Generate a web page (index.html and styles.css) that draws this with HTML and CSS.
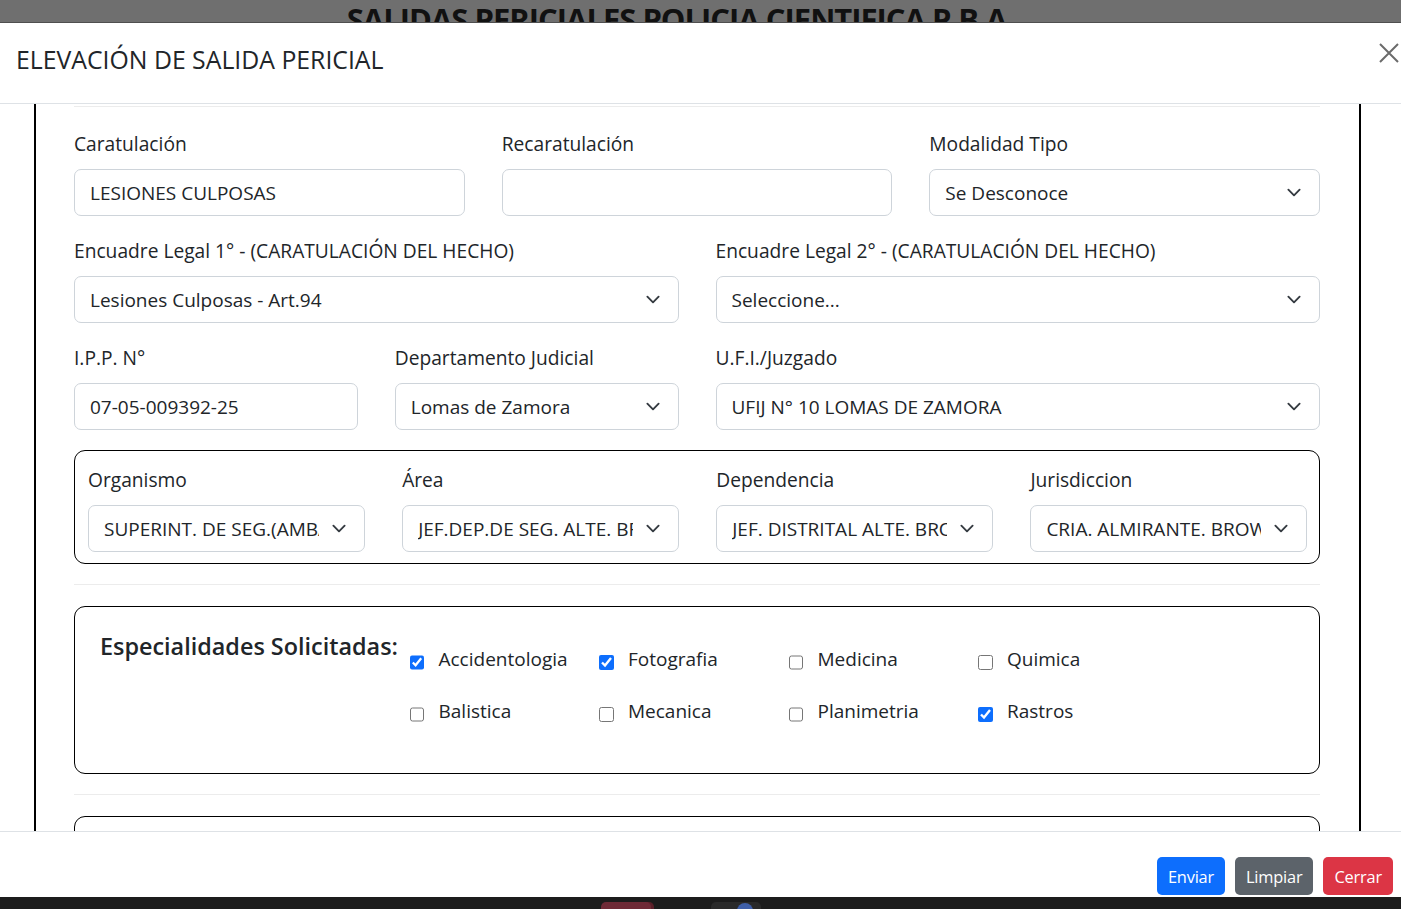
FILE: index.html
```html
<!DOCTYPE html>
<html lang="es">
<head>
<meta charset="utf-8">
<title>Elevación de salida pericial</title>
<link rel="stylesheet" href="styles.css">
</head>
<body>
<div class="app-bg">
  <h1 class="app-title">SALIDAS PERICIALES POLICIA CIENTIFICA P.B.A.</h1>
</div>
<div class="modal">
  <div class="modal-header">
    <h5 class="modal-title">ELEVACIÓN DE SALIDA PERICIAL</h5>
    <button class="btn-close" type="button" aria-label="Cerrar">
      <svg viewBox="0 0 20 20" width="20" height="20"><path d="M1 1L19 19M19 1L1 19" stroke="#6b6b6b" stroke-width="2" fill="none"/></svg>
    </button>
  </div>
  <div class="modal-body">
    <div class="frame">
      <hr class="sep sep-top">
      <div class="grid cols-3">
        <div class="field"><label class="lbl">Caratulación</label><input class="control" type="text" value="LESIONES CULPOSAS" readonly></div>
        <div class="field"><label class="lbl">Recaratulación</label><input class="control" type="text" value="" readonly></div>
        <div class="field"><label class="lbl">Modalidad Tipo</label><div class="control select"><span class="sel-text">Se Desconoce</span><svg class="chev" viewBox="0 0 16 16"><path d="m2 5 6 6 6-6" fill="none" stroke="#343a40" stroke-linecap="round" stroke-linejoin="round" stroke-width="2"/></svg></div></div>
      </div>
      <div class="grid cols-2">
        <div class="field"><label class="lbl">Encuadre Legal 1° - (CARATULACIÓN DEL HECHO)</label><div class="control select"><span class="sel-text">Lesiones Culposas - Art.94</span><svg class="chev" viewBox="0 0 16 16"><path d="m2 5 6 6 6-6" fill="none" stroke="#343a40" stroke-linecap="round" stroke-linejoin="round" stroke-width="2"/></svg></div></div>
        <div class="field"><label class="lbl">Encuadre Legal 2° - (CARATULACIÓN DEL HECHO)</label><div class="control select"><span class="sel-text">Seleccione...</span><svg class="chev" viewBox="0 0 16 16"><path d="m2 5 6 6 6-6" fill="none" stroke="#343a40" stroke-linecap="round" stroke-linejoin="round" stroke-width="2"/></svg></div></div>
      </div>
      <div class="grid cols-4">
        <div class="field"><label class="lbl">I.P.P. N°</label><input class="control" type="text" value="07-05-009392-25" readonly></div>
        <div class="field"><label class="lbl">Departamento Judicial</label><div class="control select"><span class="sel-text">Lomas de Zamora</span><svg class="chev" viewBox="0 0 16 16"><path d="m2 5 6 6 6-6" fill="none" stroke="#343a40" stroke-linecap="round" stroke-linejoin="round" stroke-width="2"/></svg></div></div>
        <div class="field span-2"><label class="lbl">U.F.I./Juzgado</label><div class="control select"><span class="sel-text">UFIJ N° 10 LOMAS DE ZAMORA</span><svg class="chev" viewBox="0 0 16 16"><path d="m2 5 6 6 6-6" fill="none" stroke="#343a40" stroke-linecap="round" stroke-linejoin="round" stroke-width="2"/></svg></div></div>
      </div>
      <div class="group-box">
        <div class="grid cols-4 inner">
          <div class="field"><label class="lbl">Organismo</label><div class="control select"><span class="sel-text">SUPERINT. DE SEG.(AMBA SUR)</span><svg class="chev" viewBox="0 0 16 16"><path d="m2 5 6 6 6-6" fill="none" stroke="#343a40" stroke-linecap="round" stroke-linejoin="round" stroke-width="2"/></svg></div></div>
          <div class="field"><label class="lbl">Área</label><div class="control select"><span class="sel-text">JEF.DEP.DE SEG. ALTE. BROWN</span><svg class="chev" viewBox="0 0 16 16"><path d="m2 5 6 6 6-6" fill="none" stroke="#343a40" stroke-linecap="round" stroke-linejoin="round" stroke-width="2"/></svg></div></div>
          <div class="field"><label class="lbl">Dependencia</label><div class="control select"><span class="sel-text">JEF. DISTRITAL ALTE. BROWN</span><svg class="chev" viewBox="0 0 16 16"><path d="m2 5 6 6 6-6" fill="none" stroke="#343a40" stroke-linecap="round" stroke-linejoin="round" stroke-width="2"/></svg></div></div>
          <div class="field"><label class="lbl">Jurisdiccion</label><div class="control select"><span class="sel-text">CRIA. ALMIRANTE. BROWN 1ra</span><svg class="chev" viewBox="0 0 16 16"><path d="m2 5 6 6 6-6" fill="none" stroke="#343a40" stroke-linecap="round" stroke-linejoin="round" stroke-width="2"/></svg></div></div>
        </div>
      </div>
      <hr class="sep sep-mid">
      <div class="spec-box">
        <h4 class="spec-title">Especialidades Solicitadas:</h4>
        <div class="spec-grid">
          <label class="check"><input type="checkbox" checked>Accidentologia</label>
          <label class="check"><input type="checkbox" checked>Fotografia</label>
          <label class="check"><input type="checkbox">Medicina</label>
          <label class="check"><input type="checkbox">Quimica</label>
          <label class="check"><input type="checkbox">Balistica</label>
          <label class="check"><input type="checkbox">Mecanica</label>
          <label class="check"><input type="checkbox">Planimetria</label>
          <label class="check"><input type="checkbox" checked>Rastros</label>
        </div>
      </div>
      <hr class="sep sep-mid">
      <div class="spec-box empty"></div>
    </div>
  </div>
  <div class="modal-footer">
    <button class="btn btn-primary" type="button">Enviar</button>
    <button class="btn btn-secondary" type="button">Limpiar</button>
    <button class="btn btn-danger" type="button">Cerrar</button>
  </div>
</div>
<div class="taskbar">
  <span class="tb-icon tb-red"></span>
  <span class="tb-icon tb-dark"><span class="tb-dot"></span></span>
</div>
</body>
</html>
```

FILE: styles.css
```css
html, body {
  margin: 0;
  height: 909px;
  overflow: hidden;
}
body {
  font-family: "Open Sans", "Noto Sans", sans-serif;
  color: #212529;
  background: #6f6f6f;
  display: flex;
  flex-direction: column;
}

/* page behind the modal */
.app-bg {
  flex: none;
  height: 22px;
  overflow: hidden;
  background: #6f6f6f;
}
.app-title {
  margin: 0;
  padding: 2px 40px 0 0;
  text-align: center;
  font-size: 31px;
  line-height: 34px;
  letter-spacing: -1px;
  font-weight: 700;
  color: #111;
  white-space: nowrap;
}

/* modal */
.modal {
  flex: 1;
  min-height: 0;
  display: flex;
  flex-direction: column;
  background: #fff;
  border-top: 1px solid #4f4f4f;
}
.modal-header {
  flex: none;
  height: 81px;
  box-sizing: border-box;
  border-bottom: 1px solid #dee2e6;
  display: flex;
  justify-content: space-between;
  align-items: flex-start;
  padding: 0 2px 0 16px;
}
.modal-title {
  margin: 21px 0 0;
  font-size: 24.8px;
  line-height: 30px;
  font-weight: 500;
  color: #212529;
}
.btn-close {
  margin-top: 20px;
  padding: 0;
  border: 0;
  background: none;
  width: 20px;
  height: 20px;
}
.btn-close svg { display: block; }

.modal-body {
  flex: none;
  height: 727px;
  overflow: hidden;
}
.frame {
  margin-left: 34px;
  width: 1327px;
  height: 100%;
  box-sizing: border-box;
  border-left: 2px solid #000;
  border-right: 2px solid #000;
  padding: 2px 39px 0 38px;
}
.sep {
  border: 0;
  border-top: 1px solid #ececec;
  margin: 0;
}
.sep-top { margin-bottom: 22px; }
.sep-mid { margin: 20px 0 20.5px; }

.grid {
  display: grid;
  column-gap: 37px;
}
.cols-3 { grid-template-columns: repeat(3, 1fr); }
.cols-2 { grid-template-columns: repeat(2, 1fr); }
.cols-4 { grid-template-columns: repeat(4, 1fr); }
.span-2 { grid-column: span 2; }

.field { margin-bottom: 20px; min-width: 0; }
.lbl {
  display: block;
  font-size: 19.2px;
  line-height: 30px;
  margin-bottom: 9.5px;
  white-space: nowrap;
}
.control {
  display: flex;
  align-items: center;
  width: 100%;
  height: 47.5px;
  box-sizing: border-box;
  margin: 0;
  border: 1px solid #ced4da;
  border-radius: 7px;
  padding: 1px 15px 0;
  font-family: inherit;
  font-size: 19px;
  color: #212529;
  background: #fff;
  outline: none;
}
.select { padding-right: 15px; }
.sel-text {
  flex: 1;
  min-width: 0;
  overflow: hidden;
  white-space: nowrap;
  margin-right: 10px;
}
.chev {
  flex: none;
  width: 20px;
  height: 15px;
}

/* bordered groups */
.group-box {
  border: 1px solid #000;
  border-radius: 11px;
  padding: 14px 12px 11px 13px;
}
.group-box .inner { column-gap: 37.5px; }
.group-box .field { margin-bottom: 0; }

.spec-box {
  border: 1px solid #000;
  border-radius: 11px;
  padding: 24.5px 25px 47px;
  display: flex;
  align-items: flex-start;
}
.spec-box.empty { height: 100px; }
.spec-title {
  flex: none;
  width: 309.5px;
  margin: 0;
  font-size: 23.4px;
  line-height: 30px;
  font-weight: 600;
  white-space: nowrap;
}
.spec-grid {
  margin-top: 13.3px;
  display: grid;
  grid-template-columns: repeat(4, 189.5px);
  row-gap: 22px;
}
.check {
  display: flex;
  align-items: center;
  height: 30px;
  font-size: 19px;
  white-space: nowrap;
}
.check input {
  flex: none;
  width: 14.5px;
  height: 14.5px;
  margin: 6px 14.5px 0 0;
  accent-color: #0d6efd;
}

/* footer */
.modal-footer {
  flex: 1;
  border-top: 1px solid #dee2e6;
  display: flex;
  justify-content: flex-end;
  align-items: flex-start;
  gap: 10px;
  padding: 25px 8px 0;
}
.btn {
  height: 38px;
  border: 0;
  border-radius: 5px;
  padding: 0 11px;
  font-family: inherit;
  font-size: 16.4px;
  letter-spacing: -0.2px;
  color: #fff;
}
.btn-primary { background: #0d6efd; }
.btn-secondary { background: #5c636a; }
.btn-danger { background: #dc3545; }

/* taskbar over the bottom of the window */
.taskbar {
  position: fixed;
  left: 0;
  right: 0;
  bottom: 0;
  height: 12px;
  background: #1c1c1c;
  display: flex;
  align-items: flex-start;
  padding-left: 601px;
  gap: 60px;
}
.tb-icon {
  margin-top: 5px;
  width: 50px;
  height: 12px;
  border-radius: 5px;
}
.tb-red { background: #6e2a36; box-shadow: 3px 0 0 #5a2029; }
.tb-dark { background: #2a2a2a; position: relative; }
.tb-dot {
  position: absolute;
  left: 26px;
  top: 1px;
  width: 16px;
  height: 16px;
  border-radius: 50%;
  background: #3f5fa8;
}
```
